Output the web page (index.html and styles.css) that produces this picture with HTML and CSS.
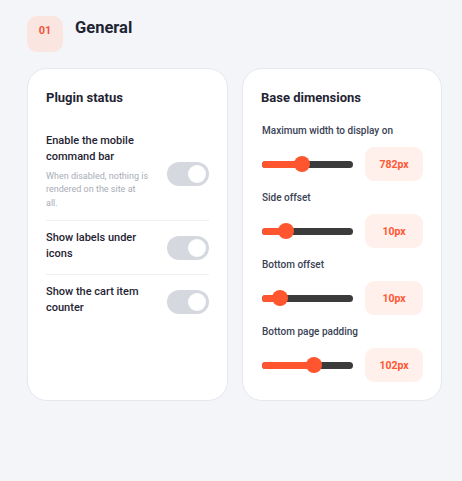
FILE: index.html
```html
<!DOCTYPE html>
<html lang="en">
<head>
<meta charset="utf-8">
<title>General</title>
<link rel="stylesheet" href="styles.css">
</head>
<body>
<div class="page">
  <header class="section-head">
    <div class="badge">01</div>
    <h1 class="section-title">General</h1>
  </header>
  <div class="cards">
    <section class="card">
      <h2 class="card-title">Plugin status</h2>
      <div class="rows">
        <div class="row row-first">
          <div class="row-text">
            <div class="row-label">Enable the mobile command bar</div>
            <div class="row-desc">When disabled, nothing is rendered on the site at<br>all.</div>
          </div>
          <div class="toggle"><span class="knob"></span></div>
        </div>
        <div class="row">
          <div class="row-text">
            <div class="row-label">Show labels under icons</div>
          </div>
          <div class="toggle"><span class="knob"></span></div>
        </div>
        <div class="row row-last">
          <div class="row-text">
            <div class="row-label">Show the cart item counter</div>
          </div>
          <div class="toggle"><span class="knob"></span></div>
        </div>
      </div>
    </section>
    <section class="card">
      <h2 class="card-title">Base dimensions</h2>
      <div class="fields">
        <div class="field">
          <div class="field-label">Maximum width to display on</div>
          <div class="field-control">
            <div class="slider"><div class="track"><div class="fill" style="width:40px"></div></div><span class="thumb" style="left:40px"></span></div>
            <div class="value">782px</div>
          </div>
        </div>
        <div class="field">
          <div class="field-label">Side offset</div>
          <div class="field-control">
            <div class="slider"><div class="track"><div class="fill" style="width:24px"></div></div><span class="thumb" style="left:24px"></span></div>
            <div class="value">10px</div>
          </div>
        </div>
        <div class="field">
          <div class="field-label">Bottom offset</div>
          <div class="field-control">
            <div class="slider"><div class="track"><div class="fill" style="width:18px"></div></div><span class="thumb" style="left:18px"></span></div>
            <div class="value">10px</div>
          </div>
        </div>
        <div class="field">
          <div class="field-label">Bottom page padding</div>
          <div class="field-control">
            <div class="slider"><div class="track"><div class="fill" style="width:52px"></div></div><span class="thumb" style="left:52px"></span></div>
            <div class="value">102px</div>
          </div>
        </div>
      </div>
    </section>
  </div>
</div>
</body>
</html>
```
FILE: styles.css
```css
* { box-sizing: border-box; }
html, body {
  margin: 0;
  padding: 0;
  background: #f4f5f9;
  font-family: Roboto, "Liberation Sans", Arial, sans-serif;
  color: #1f2433;
}
.page {
  padding: 16px 20px 0 27px;
}
.section-head {
  display: flex;
  align-items: flex-start;
  gap: 12px;
}
.badge {
  width: 36px;
  height: 36px;
  border-radius: 10px;
  background: #fbe5e1;
  color: #f2553a;
  font-size: 11px;
  line-height: 14px;
  font-weight: 700;
  display: flex;
  justify-content: center;
  padding-top: 8px;
}
.section-title {
  margin: 0;
  padding-top: 2px;
  font-size: 16.5px;
  line-height: 20px;
  font-weight: 700;
  color: #1e2433;
}
.cards {
  margin-top: 16px;
  display: grid;
  grid-template-columns: 201px 200px;
  gap: 14px;
}
.card {
  background: #fff;
  border: 1px solid #e6e8ee;
  border-radius: 20px;
  height: 333px;
  padding: 20px 18px 0 18px;
}
.card-title {
  margin: 0;
  font-size: 13px;
  line-height: 18px;
  font-weight: 700;
  color: #1f2433;
}
.rows {
  margin-top: 26px;
}
.row {
  display: flex;
  align-items: center;
  gap: 12px;
  padding: 9px 0 12px;
  border-bottom: 1px solid #eeeff3;
}
.row-first { padding-top: 0; padding-bottom: 10px; }
.row-last { border-bottom: none; }
.row-text { flex: 1; }
.row-label {
  font-size: 11px;
  line-height: 16px;
  font-weight: 500;
  color: #1f2433;
  padding-right: 3px;
}
.row-desc {
  margin-top: 4.5px;
  max-width: 104px;
  font-size: 9px;
  line-height: 13.5px;
  color: #a9adb8;
}
.toggle {
  width: 42px;
  height: 24px;
  margin-top: 4px;
  border-radius: 12px;
  background: #d5d8df;
  padding: 3px;
  display: flex;
  justify-content: flex-end;
  flex-shrink: 0;
}
.knob {
  width: 18px;
  height: 18px;
  border-radius: 50%;
  background: #fff;
}
.fields {
  margin-top: 17px;
  padding-left: 1px;
}
.field {
  padding-bottom: 10px;
}
.field-label {
  font-size: 10px;
  line-height: 14px;
  font-weight: 500;
  color: #3a4254;
}
.field-control {
  margin-top: 9px;
  display: flex;
  align-items: center;
  gap: 12px;
}
.slider {
  position: relative;
  flex: 1;
  height: 16px;
  display: flex;
  align-items: center;
}
.track {
  width: 100%;
  height: 7px;
  border-radius: 4px;
  background: #3b3b3b;
  overflow: hidden;
}
.fill {
  height: 100%;
  background: #ff5630;
}
.thumb {
  position: absolute;
  top: 0;
  width: 16px;
  height: 16px;
  margin-left: -8px;
  border-radius: 50%;
  background: #ff5630;
}
.value {
  width: 58px;
  height: 34px;
  border-radius: 9px;
  background: #fff0ec;
  color: #ff5733;
  font-size: 10.5px;
  font-weight: 700;
  display: flex;
  align-items: center;
  justify-content: center;
  flex-shrink: 0;
}
```
